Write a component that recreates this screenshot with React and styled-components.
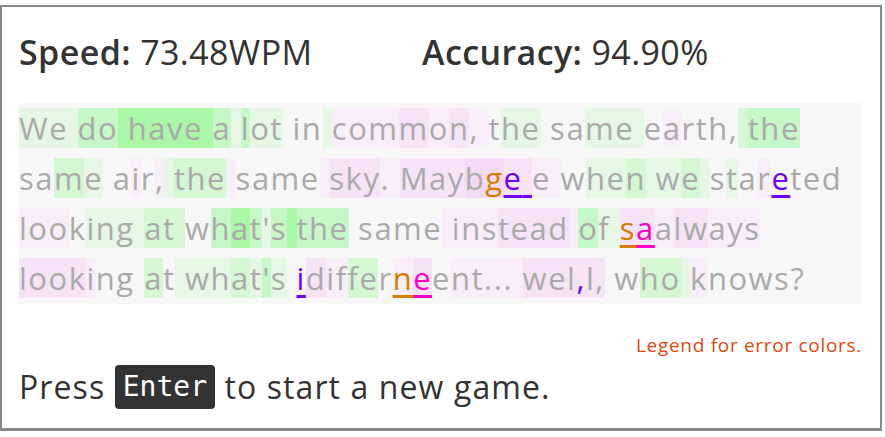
import React from 'react';
import styled, { createGlobalStyle } from 'styled-components';

const GlobalStyle = createGlobalStyle`
  body {
    margin: 0;
    background: #fff;
    font-family: "Open Sans", "Noto Sans", sans-serif;
  }
`;

const heat = {
  '.': 'transparent',
  a: '#e6f7e6',
  b: '#d6f7d4',
  c: '#c6f7c6',
  d: '#aaf7a8',
  p: '#f7eef7',
  q: '#f7e3f6',
  r: '#f4d9f4',
};

const errs = {
  o: { color: '#d67d00', under: true },
  O: { color: '#d67d00', under: false },
  p: { color: '#7000ff', under: true },
  P: { color: '#7000ff', under: false },
  m: { color: '#ff00c8', under: true },
};

// [text, heat codes, error codes]
const lines = [
  [
    ['We ', 'aaa'],
    ['do ', 'ccd'],
    ['have ', 'ddddd'],
    ['a ', 'ca'],
    ['lot ', 'caa.'],
    ['in ', '..a'],
    ['common, ', 'pppqpqpp'],
    ['the ', '.aa.'],
    ['same ', '..aaa'],
    ['earth, ', '.p....b'],
    ['the', 'ccc'],
  ],
  [
    ['same ', '..ba.'],
    ['air, ', '.p.pa'],
    ['the ', 'bbbp'],
    ['same ', '....p'],
    ['sky. ', 'qqqpp'],
    ['Maybge ', 'qqqrrqq', '....Opp'],
    ['e ', 'pp'],
    ['when ', '.aaba'],
    ['we ', 'aba'],
    ['stareted', '.a.p....', '....p...'],
  ],
  [
    ['looking ', 'ppp.aaaa'],
    ['at ', 'bbb'],
    ["what's ", '.cdcacd'],
    ['the ', 'ccc.'],
    ['same ', '....p'],
    ['instead ', 'pppqqqqp'],
    ['of ', 'caa'],
    ['saalways', 'qqpqqppp', 'om'],
  ],
  [
    ['looking ', 'qqqqp...'],
    ['at ', 'b.a'],
    ["what's ", 'aabaca.'],
    ['idifferneent... ', '.qppbb.pq.pppppp', 'p......om'],
    ['wel,l, ', 'qqqqqq.', '...P'],
    ['who ', '.bba'],
    ['knows?', 'p.....'],
  ],
];

const Frame = styled.div`
  margin-top: 5px;
  width: 882px;
  height: 426px;
  box-sizing: border-box;
  border: 2px solid #888;
  border-bottom-width: 3px;
  padding: 0 18px 0 17px;
  color: #333;
`;

const Stats = styled.div`
  display: grid;
  grid-template-columns: 403px auto;
  padding-top: 22px;
  height: 72px;
  box-sizing: border-box;
  font-size: 34px;
  letter-spacing: 0.4px;
  line-height: 46px;
`;

const Stat = styled.div`
  white-space: nowrap;
  b {
    font-weight: 600;
  }
`;

const Passage = styled.div`
  background: #f7f7f7;
  padding: 5px 0 6px;
  margin-top: 24px;
`;

const Line = styled.div`
  height: 40px;
  margin-bottom: ${(p) => (p.$last ? 0 : 10)}px;
  white-space: pre;
  font-size: 31px;
  letter-spacing: 1.5px;
  line-height: 40px;
  color: #aaa;
`;

const Char = styled.span`
  display: inline-block;
  vertical-align: top;
  height: 40px;
  background: ${(p) => p.$bg};
  color: ${(p) => p.$color || 'inherit'};
  text-decoration: ${(p) => (p.$under ? 'underline' : 'none')};
  text-decoration-thickness: 3px;
  text-underline-offset: 5px;
`;

const Legend = styled.div`
  text-align: right;
  color: #e4480c;
  font-size: 19px;
  letter-spacing: 0.7px;
  margin-top: 29px;
  line-height: 24px;
`;

const Prompt = styled.div`
  font-size: 32px;
  letter-spacing: 1.1px;
  line-height: 44px;
  margin-top: 8px;
  color: #333;
`;

const Key = styled.kbd`
  display: inline-block;
  background: #333;
  color: #fff;
  font-family: "DejaVu Sans Mono", "Liberation Mono", monospace;
  font-size: 28px;
  letter-spacing: 0;
  line-height: 44px;
  padding: 0 8px;
  border-radius: 4px;
  vertical-align: top;
`;

function PassageLine({ segs, last }) {
  const chars = [];
  segs.forEach(([text, codes, errCodes = ''], si) => {
    [...text].forEach((ch, i) => {
      const e = errs[errCodes[i]];
      chars.push(
        <Char
          key={si + '-' + i}
          $bg={heat[codes[i]] || 'transparent'}
          $color={e && e.color}
          $under={e && e.under}
        >
          {ch}
        </Char>
      );
    });
  });
  return <Line $last={last}>{chars}</Line>;
}

export default function App() {
  return (
    <>
      <GlobalStyle />
      <Frame>
        <Stats>
          <Stat>
            <b>Speed:</b> 73.48WPM
          </Stat>
          <Stat>
            <b>Accuracy:</b> 94.90%
          </Stat>
        </Stats>
        <Passage>
          {lines.map((segs, i) => (
            <PassageLine key={i} segs={segs} last={i === lines.length - 1} />
          ))}
        </Passage>
        <Legend>Legend for error colors.</Legend>
        <Prompt>
          Press <Key>Enter</Key> to start a new game.
        </Prompt>
      </Frame>
    </>
  );
}
